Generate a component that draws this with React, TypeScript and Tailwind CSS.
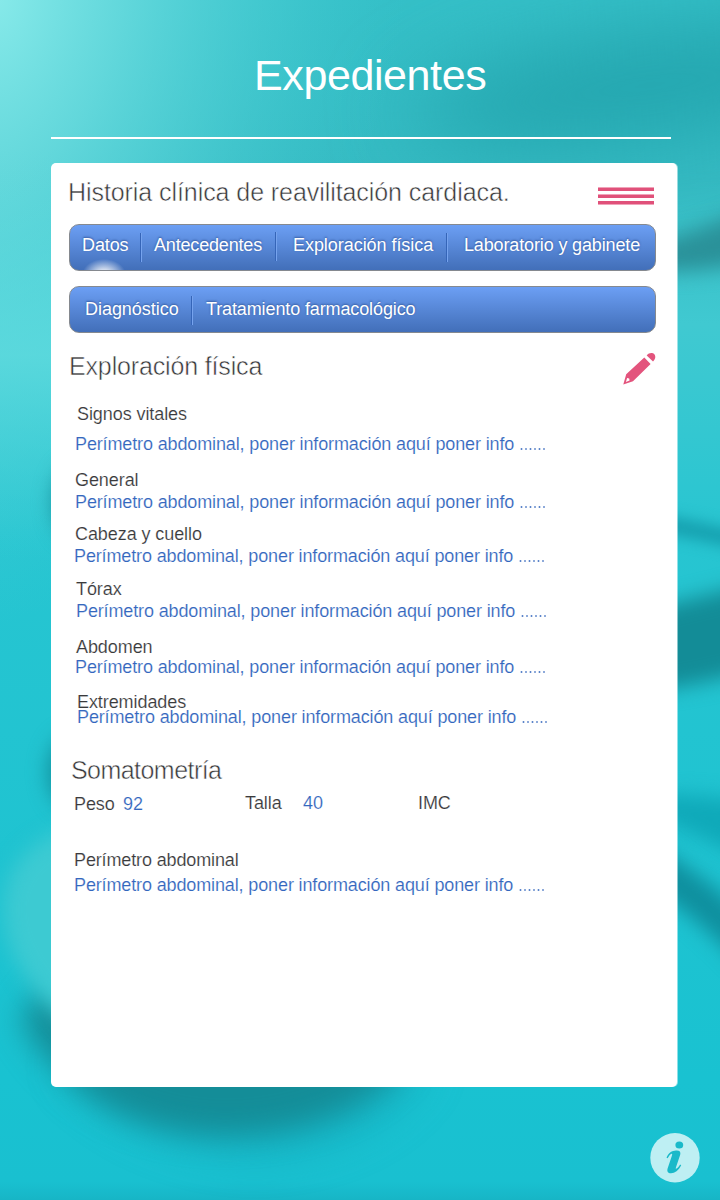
import React from "react";

function Heading({ children, className }: { children: React.ReactNode; className: string }) {
  return (
    <h2 className={`text-[25px] leading-[28px] whitespace-nowrap text-[#373739] [-webkit-text-stroke:0.5px_white] ${className}`}>
      {children}
    </h2>
  );
}

function Label({ children, className = "" }: { children: React.ReactNode; className?: string }) {
  return <div className={`h-5 text-[18px] leading-5 tracking-[-0.08px] whitespace-nowrap text-[#3a3a3c] [-webkit-text-stroke:0.15px_white] ${className}`}>{children}</div>;
}

function Value({ children, className = "" }: { children: React.ReactNode; className?: string }) {
  return <div className={`h-5 text-[18px] leading-5 tracking-[-0.13px] whitespace-nowrap text-[#3467be] [-webkit-text-stroke:0.15px_white] ${className}`}>{children}</div>;
}

function Info({ className }: { className: string }) {
  return (
    <Value className={className}>
      Perímetro abdominal, poner información aquí poner info <span className="tracking-[-0.5px] opacity-80">......</span>
    </Value>
  );
}

function Divider({ className }: { className: string }) {
  return <span className={`flex h-[29px] w-[2px] shrink-0 ${className}`}><i className="w-px bg-[#3565b8]" /><i className="w-px bg-[#76a3ee]" /></span>;
}

const bar = "flex h-[47px] w-[587px] shrink-0 overflow-hidden rounded-[10px] border border-[#85898f] bg-linear-to-b from-[#6c9ff4] to-[#426fb9] text-[18px] leading-5 whitespace-nowrap text-white [text-shadow:0_-1px_2px_rgba(20,50,110,0.55)]";

const sections = [
  { title: "Signos vitales", row: "mt-[23px]", label: "ml-[26px]", value: "mt-[10px] ml-6" },
  { title: "General", row: "mt-4", label: "ml-6", value: "mt-[2px] ml-6" },
  { title: "Cabeza y cuello", row: "mt-3", label: "ml-6", value: "mt-[2px] ml-[23px]" },
  { title: "Tórax", row: "mt-[13px]", label: "ml-[25px]", value: "mt-[2px] ml-[25px]" },
  { title: "Abdomen", row: "mt-4", label: "ml-[25px]", value: "ml-6" },
  { title: "Extremidades", row: "mt-[15px]", label: "ml-[26px]", value: "mt-[-5px] ml-[26px]" },
];

function Backdrop() {
  return (
    <svg className="absolute inset-0 h-[1200px] w-[720px]" viewBox="0 0 720 1200" colorInterpolationFilters="sRGB" aria-hidden="true">
      <defs>
        <linearGradient id="base" x1="0" y1="0" x2="0" y2="1">
          <stop offset="0" stopColor="#34bfc7" />
          <stop offset="0.15" stopColor="#35bac2" />
          <stop offset="0.27" stopColor="#40c9d1" />
          <stop offset="0.45" stopColor="#27c5d1" />
          <stop offset="0.9" stopColor="#19c2d1" />
          <stop offset="0.985" stopColor="#19c0d0" />
          <stop offset="1" stopColor="#17b5c6" />
        </linearGradient>
        <radialGradient id="glow" gradientUnits="userSpaceOnUse" cx="0" cy="0" r="1" gradientTransform="rotate(14) scale(400 660)">
          <stop offset="0" stopColor="#86e9e9" />
          <stop offset="0.3" stopColor="#6adcdf" stopOpacity="0.85" />
          <stop offset="0.6" stopColor="#56d5da" stopOpacity="0.5" />
          <stop offset="1" stopColor="#3ecbd3" stopOpacity="0" />
        </radialGradient>
        <linearGradient id="edge" x1="0" y1="150" x2="0" y2="560" gradientUnits="userSpaceOnUse">
          <stop offset="0" stopColor="#5ddade" stopOpacity="0" />
          <stop offset="0.5" stopColor="#5ddade" stopOpacity="0.8" />
          <stop offset="1" stopColor="#3ccfd8" stopOpacity="0" />
        </linearGradient>
        <filter id="b7" filterUnits="userSpaceOnUse" x="-100" y="-100" width="920" height="1400"><feGaussianBlur stdDeviation="7" /></filter>
        <filter id="b10" filterUnits="userSpaceOnUse" x="-100" y="-100" width="920" height="1400"><feGaussianBlur stdDeviation="10" /></filter>
        <filter id="b15" filterUnits="userSpaceOnUse" x="-100" y="-100" width="920" height="1400"><feGaussianBlur stdDeviation="15" /></filter>
        <filter id="b22" filterUnits="userSpaceOnUse" x="-100" y="-100" width="920" height="1400"><feGaussianBlur stdDeviation="22" /></filter>
        <filter id="b50" filterUnits="userSpaceOnUse" x="-200" y="-200" width="1200" height="800"><feGaussianBlur stdDeviation="42" /></filter>
      </defs>
      <rect width="720" height="1200" fill="url(#base)" />
      <ellipse cx="650" cy="85" rx="240" ry="50" fill="#22a4ad" filter="url(#b50)" transform="rotate(-8 650 85)" />
      <rect width="720" height="700" fill="url(#glow)" />
      <rect y="150" width="52" height="410" fill="url(#edge)" />
      <path d="M620 254Q690 235 770 200V255Q720 276 620 270Z" fill="#2a9199" filter="url(#b10)" />
      <path d="M640 416Q700 524 640 524Q700 530 770 548" stroke="none" fill="none" />
      <path d="M640 520Q700 530 770 548" stroke="#16a1b0" strokeWidth="18" fill="none" filter="url(#b7)" />
      <path d="M620 618Q690 598 770 580V664Q700 688 620 694Z" fill="#138c97" filter="url(#b10)" />
      <path d="M640 792Q690 795 770 802V872Q710 840 640 812Z" fill="#0fa9b9" filter="url(#b10)" />
      <path d="M645 860L700 900Q730 925 770 965" stroke="#0f8f9e" strokeWidth="38" fill="none" filter="url(#b10)" />
      <ellipse cx="76" cy="502" rx="22" ry="38" fill="#168b97" filter="url(#b10)" />
      <ellipse cx="74" cy="772" rx="26" ry="38" fill="#128f9c" filter="url(#b10)" />
      <path d="M60 1060Q140 1150 260 1152Q380 1145 430 1060Z" fill="#14a9ba" filter="url(#b22)" opacity="0.7" />
      <path d="M20 1020Q85 1132 225 1135Q345 1132 405 1065L300 980H50Z" fill="#148d98" filter="url(#b15)" />
      <path d="M75 826Q0 850 4 915Q6 975 85 1040Z" fill="#3dcad2" filter="url(#b10)" />
    </svg>
  );
}

export default function App() {
  return (
    <div className="relative h-[1200px] w-[720px] overflow-hidden bg-[#19c2d1] font-['Liberation_Sans',sans-serif]">
      <Backdrop />
      <div className="relative flex h-full flex-col">
        <header className="ml-[51px] flex h-[139px] w-[620px] shrink-0 flex-col items-start border-b-2 border-white">
          <h1 className="mt-[50px] ml-[203px] text-[43px] leading-[50px] tracking-[-0.4px] text-white">Expedientes</h1>
        </header>
        <main className="mt-6 ml-[51px] flex h-[924px] w-[626px] shrink-0 flex-col rounded-[5px] bg-white shadow-[1px_0_0_rgba(255,255,255,0.5)]">
          <div className="flex h-[61px] shrink-0 items-start">
            <Heading className="mt-[15px] ml-[17px] tracking-[-0.07px]">Historia clínica de reavilitación cardiaca.</Heading>
            <button aria-label="Menú" className="mt-6 mr-[23px] ml-auto flex w-14 flex-col gap-[3px]">
              <i className="h-1 border-t border-[#f0a3b9] bg-[#e0517a]" />
              <i className="h-1 border-t border-[#f0a3b9] bg-[#e0517a]" />
              <i className="h-1 border-b border-[#f0a3b9] bg-[#e0517a]" />
            </button>
          </div>
          <nav className={`ml-[18px] ${bar}`}>
            <span className="relative mt-[10px] ml-3 w-[58px] tracking-[-0.1px]">
              Datos
              <i className="absolute top-[24px] left-0 h-8 w-[44px] bg-[radial-gradient(closest-side,rgba(255,255,255,0.95),rgba(255,255,255,0.75)_35%,transparent)]" />
            </span>
            <Divider className="mt-2" />
            <span className="mt-[10px] ml-3 w-[121px] tracking-[-0.17px]">Antecedentes</span>
            <Divider className="mt-[7px]" />
            <span className="mt-[10px] ml-4 w-[153px] tracking-[-0.05px]">Exploración física</span>
            <Divider className="mt-2" />
            <span className="mt-[10px] ml-4 tracking-[-0.14px]">Laboratorio y gabinete</span>
          </nav>
          <nav className={`mt-[15px] ml-[18px] ${bar}`}>
            <span className="mt-[12px] ml-[15px] w-[106px] tracking-[-0.04px]">Diagnóstico</span>
            <Divider className="mt-[9px]" />
            <span className="mt-[12px] ml-[13px] tracking-[-0.12px]">Tratamiento farmacológico</span>
          </nav>
          <div className="mt-[19px] flex h-[29px] shrink-0 items-start">
            <Heading className="ml-[18px] tracking-[-0.15px]">Exploración física</Heading>
            <svg className="mt-px mr-[21px] ml-auto h-8 w-[33px] shrink-0 overflow-visible" viewBox="0 0 33 32" fill="#e3547d">
              <path fillRule="evenodd" d="M0.3 31.5L3.2 21.3L21.3 4.6L27.6 10.9L10 28.3ZM2.9 28.9L6.6 27.5L6.2 25.5L4.1 25Z" />
              <path d="M23.7 2.4C26-.6 29.6-.4 31.1 1.1C33 3 32.6 6.2 30 8.5Z" />
            </svg>
          </div>
          {sections.map((s) => (
            <section key={s.title} className={s.row}>
              <Label className={s.label}>{s.title}</Label>
              <Info className={s.value} />
            </section>
          ))}
          <Heading className="mt-[29px] ml-5 tracking-[-0.55px]">Somatometría</Heading>
          <div className="mt-[9px] flex h-[21px] shrink-0">
            <Label className="mt-px ml-[23px] w-[49px]">Peso</Label>
            <Value className="mt-px w-[122px]">92</Value>
            <Label className="w-[58px]">Talla</Label>
            <Value className="w-[115px]">40</Value>
            <Label>IMC</Label>
          </div>
          <Label className="mt-9 ml-[23px] tracking-[-0.13px]">Perímetro abdominal</Label>
          <Info className="mt-[5px] ml-[23px]" />
        </main>
        <button aria-label="Información" className="mt-[46px] mr-5 h-[50px] w-[50px] shrink-0 self-end">
          <svg viewBox="0 0 50 50" className="h-full w-full">
            <circle cx="25" cy="24.7" r="24.7" fill="#beeff3" />
            <g fill="#1ab9c9">
              <ellipse cx="29.3" cy="12" rx="3.9" ry="3.5" />
              <path d="M16.5 24.7C18.5 19.8 22 17.8 26 17.5C29.6 17.3 31 18.8 30.2 21.8L26 34.2C25.4 35.9 26 36 27 35.3C28.4 34.3 29.3 33 30.1 31.6L31.2 32.3C28.7 37.5 24.6 40.3 21.1 40.3C17.8 40.3 16.8 38.3 17.6 35.5L21.8 23.1C22.5 21 22.2 20.4 21 21C19.6 21.8 18.7 23.5 17.7 25.3Z" />
            </g>
          </svg>
        </button>
      </div>
    </div>
  );
}
